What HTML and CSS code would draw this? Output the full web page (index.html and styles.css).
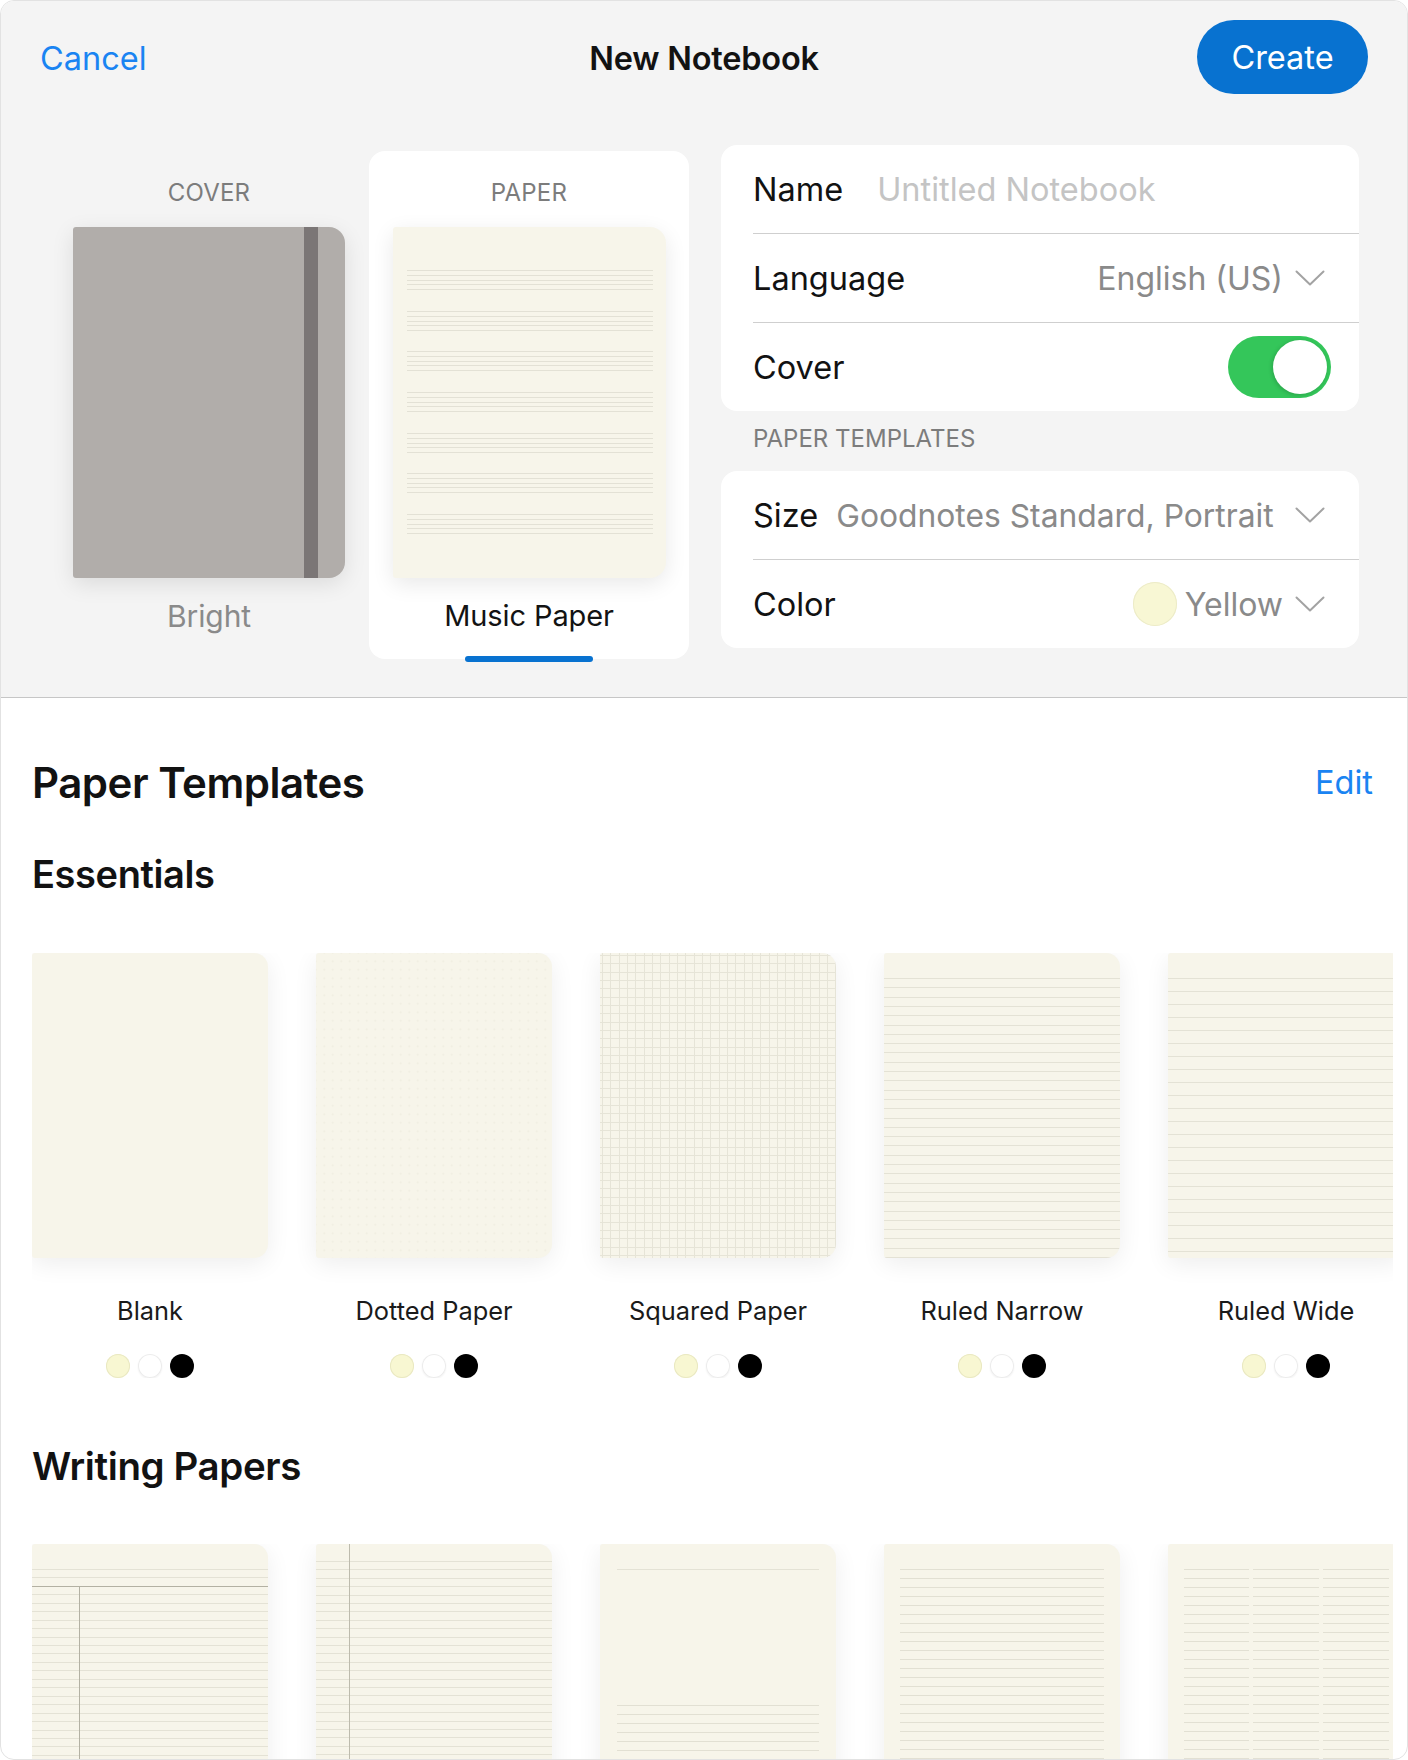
FILE: index.html
```html
<!DOCTYPE html>
<html lang="en">
<head>
<meta charset="utf-8">
<title>New Notebook</title>
<link rel="stylesheet" href="styles.css">
</head>
<body>
<div class="sheet">
  <div class="top">
    <header class="nav">
      <a class="nav-link">Cancel</a>
      <h1 class="nav-title">New Notebook</h1>
      <div class="nav-right"><button class="create">Create</button></div>
    </header>
    <div class="setup">
      <div class="picker">
        <div class="pick-panel">
          <div class="pick-label">COVER</div>
          <div class="cover"><span class="band"></span></div>
          <div class="pick-name muted">Bright</div>
        </div>
        <div class="pick-panel selected">
          <div class="pick-label">PAPER</div>
          <div class="music">
            <div class="staff"></div><div class="staff"></div><div class="staff"></div><div class="staff"></div><div class="staff"></div><div class="staff"></div><div class="staff"></div>
          </div>
          <div class="pick-name">Music Paper</div>
          <span class="indicator"></span>
        </div>
      </div>
      <div class="form">
        <div class="group">
          <div class="row">
            <span class="row-label">Name</span>
            <span class="placeholder">Untitled Notebook</span>
          </div>
          <div class="row">
            <span class="row-label">Language</span>
            <span class="row-value">English (US)</span>
            <svg class="chev" width="30" height="16" viewBox="0 0 30 16"><path d="M1.5 1.5 L15 14.5 L28.5 1.5" fill="none" stroke="#a3a3a3" stroke-width="2" stroke-linecap="round" stroke-linejoin="round"/></svg>
          </div>
          <div class="row">
            <span class="row-label">Cover</span>
            <span class="toggle"><span class="knob"></span></span>
          </div>
        </div>
        <div class="group-label">PAPER TEMPLATES</div>
        <div class="group">
          <div class="row">
            <span class="row-label">Size</span>
            <span class="row-value size-value">Goodnotes Standard, Portrait</span>
            <svg class="chev push" width="30" height="16" viewBox="0 0 30 16"><path d="M1.5 1.5 L15 14.5 L28.5 1.5" fill="none" stroke="#a3a3a3" stroke-width="2" stroke-linecap="round" stroke-linejoin="round"/></svg>
          </div>
          <div class="row">
            <span class="row-label">Color</span>
            <span class="swatch"></span>
            <span class="row-value yellow-value">Yellow</span>
            <svg class="chev" width="30" height="16" viewBox="0 0 30 16"><path d="M1.5 1.5 L15 14.5 L28.5 1.5" fill="none" stroke="#a3a3a3" stroke-width="2" stroke-linecap="round" stroke-linejoin="round"/></svg>
          </div>
        </div>
      </div>
    </div>
  </div>

  <section class="templates">
    <div class="templates-head">
      <h2 class="templates-title">Paper Templates</h2>
      <a class="edit">Edit</a>
    </div>

    <h3 class="cat-title">Essentials</h3>
    <div class="thumbs">
      <div class="thumb">
        <div class="page blank"></div>
        <div class="thumb-name">Blank</div>
        <div class="dots"><span class="dot d-yellow"></span><span class="dot d-white"></span><span class="dot d-black"></span></div>
      </div>
      <div class="thumb">
        <div class="page dotted"></div>
        <div class="thumb-name">Dotted Paper</div>
        <div class="dots"><span class="dot d-yellow"></span><span class="dot d-white"></span><span class="dot d-black"></span></div>
      </div>
      <div class="thumb">
        <div class="page squared"></div>
        <div class="thumb-name">Squared Paper</div>
        <div class="dots"><span class="dot d-yellow"></span><span class="dot d-white"></span><span class="dot d-black"></span></div>
      </div>
      <div class="thumb">
        <div class="page narrow"></div>
        <div class="thumb-name">Ruled Narrow</div>
        <div class="dots"><span class="dot d-yellow"></span><span class="dot d-white"></span><span class="dot d-black"></span></div>
      </div>
      <div class="thumb">
        <div class="page wide"></div>
        <div class="thumb-name">Ruled Wide</div>
        <div class="dots"><span class="dot d-yellow"></span><span class="dot d-white"></span><span class="dot d-black"></span></div>
      </div>
    </div>

    <h3 class="cat-title writing">Writing Papers</h3>
    <div class="thumbs">
      <div class="thumb"><div class="page cornell"></div></div>
      <div class="thumb"><div class="page margin"></div></div>
      <div class="thumb"><div class="page letter"></div></div>
      <div class="thumb"><div class="page inset"></div></div>
      <div class="thumb"><div class="page columns"></div></div>
    </div>
  </section>
</div>
</body>
</html>
```

FILE: styles.css
```css
* { box-sizing: border-box; }

html, body {
  margin: 0;
  padding: 0;
  background: #ffffff;
}

body {
  font-family: "Inter", "Noto Sans", "Liberation Sans", sans-serif;
  color: #111111;
  -webkit-font-smoothing: antialiased;
}

.sheet {
  width: 1408px;
  height: 1760px;
  overflow: hidden;
  border-radius: 14px;
  border: 1px solid #e2e2e2;
  background: #ffffff;
}

/* ---------- top area ---------- */
.top {
  height: 697px;
  background: #f4f4f4;
  border-bottom: 1px solid #c6c6c6;
}

.nav {
  height: 114px;
  display: grid;
  grid-template-columns: 1fr auto 1fr;
  align-items: center;
  padding: 0 39px 0 39px;
}

.nav-link {
  font-size: 32.5px;
  color: #1a84f2;
}

.nav-title {
  margin: 0;
  font-size: 32.5px;
  font-weight: 600;
  color: #121212;
  letter-spacing: -0.2px;
}

.nav-right {
  display: flex;
  justify-content: flex-end;
}

.create {
  height: 74px;
  width: 171px;
  border: none;
  border-radius: 37px;
  background: #0872d0;
  color: #ffffff;
  font-family: inherit;
  font-size: 32.5px;
  font-weight: 400;
  margin-top: -2px;
}

.setup {
  display: flex;
  gap: 32px;
  padding: 30px 48px 0 48px;
}

.picker {
  display: flex;
  width: 640px;
  margin-top: 6px;
  align-items: flex-start;
}

.pick-panel {
  position: relative;
  width: 320px;
  height: 508px;
  padding-top: 28px;
  display: flex;
  flex-direction: column;
  align-items: center;
  border-radius: 16px;
}

.pick-panel.selected {
  background: #ffffff;
}

.pick-label {
  height: 28px;
  line-height: 28px;
  font-size: 24px;
  color: #7c7c7c;
  letter-spacing: 0.2px;
}

.cover {
  margin-top: 20px;
  width: 272px;
  height: 351px;
  border-radius: 3px 16px 16px 3px;
  background: #b1adaa;
  box-shadow: 0 6px 22px rgba(0, 0, 0, 0.10);
  display: flex;
}

.band {
  margin-left: 231px;
  width: 14px;
  height: 100%;
  background: #7b7676;
}

.music {
  margin-top: 20px;
  width: 273px;
  height: 351px;
  border-radius: 3px 16px 16px 3px;
  background: #f7f5ea;
  box-shadow: 0 6px 22px rgba(0, 0, 0, 0.09);
  padding: 43px 13px 0 14px;
  display: flex;
  flex-direction: column;
  gap: 20.5px;
}

.staff {
  height: 20.2px;
  background: repeating-linear-gradient(to bottom, #e3e1d5 0 1px, transparent 1px 4.8px);
}

.pick-name {
  margin-top: 22px;
  height: 32px;
  line-height: 32px;
  font-size: 29px;
  color: #131313;
  letter-spacing: -0.1px;
}

.pick-name.muted {
  color: #8a8a8a;
  font-size: 30px;
}

.indicator {
  position: absolute;
  left: 96px;
  bottom: -3px;
  width: 128px;
  height: 6px;
  border-radius: 3px;
  background: #0872d0;
}

/* ---------- form ---------- */
.form {
  width: 640px;
}

.group {
  background: #ffffff;
  border-radius: 16px;
  overflow: hidden;
}

.row {
  height: 88px;
  margin-left: 32px;
  padding-right: 34px;
  display: flex;
  align-items: center;
  gap: 12px;
}

.row + .row {
  height: 89px;
  border-top: 1px solid #cfcfcf;
}

.row-label {
  font-size: 32.5px;
  color: #121212;
  flex: none;
}

.placeholder {
  margin-left: 22px;
  font-size: 32.5px;
  color: #c4c4c4;
}

.row-value {
  margin-left: auto;
  font-size: 32px;
  color: #8a8a8a;
  white-space: nowrap;
}

.size-value {
  margin-left: 6px;
  font-size: 31.8px;
}

.yellow-value {
  margin-left: 0;
}

.chev {
  flex: none;
  margin-left: 0;
}

.chev.push {
  margin-left: auto;
}

.swatch {
  margin-left: auto;
  width: 44px;
  height: 44px;
  border-radius: 50%;
  background: #f8f7d4;
  box-shadow: inset 0 0 0 1px #ecebc8;
  margin-right: -4px;
}

.toggle {
  margin-left: auto;
  margin-right: -6px;
  width: 103px;
  height: 62px;
  border-radius: 31px;
  background: #34c65a;
  padding: 4px;
  display: flex;
  justify-content: flex-end;
}

.knob {
  width: 54px;
  height: 54px;
  border-radius: 50%;
  background: #ffffff;
  box-shadow: -1px 1px 4px rgba(0, 0, 0, 0.18);
}

.group-label {
  height: 60px;
  padding: 14px 0 0 32px;
  line-height: 28px;
  font-size: 24px;
  color: #7c7c7c;
}

/* ---------- templates ---------- */
.templates {
  padding: 59px 34px 0 31px;
}

.templates-head {
  display: flex;
  justify-content: space-between;
  align-items: center;
  height: 50px;
}

.templates-title {
  margin: 0;
  font-size: 42px;
  font-weight: 600;
  letter-spacing: -0.5px;
  color: #121212;
}

.edit {
  font-size: 32.5px;
  color: #1a84f2;
}

.cat-title {
  margin: 45px 0 0 0;
  height: 44px;
  line-height: 44px;
  font-size: 38px;
  font-weight: 600;
  letter-spacing: -0.4px;
  color: #121212;
}

.cat-title.writing {
  margin-top: 66px;
  font-size: 38.5px;
}

.thumbs {
  display: flex;
  gap: 48px;
  margin: 57px 0 0 0;
  width: 1361px;
  overflow: hidden;
}

.cat-title.writing + .thumbs {
  margin-top: 56px;
}

.thumb {
  flex: none;
  width: 236px;
  display: flex;
  flex-direction: column;
  align-items: center;
}

.page {
  width: 236px;
  height: 305px;
  border-radius: 3px 14px 14px 3px;
  background-color: #f7f5ea;
  box-shadow: 0 6px 24px rgba(0, 0, 0, 0.07);
}

.dotted {
  background-image: radial-gradient(circle, rgba(180, 176, 150, 0.12) 0.8px, transparent 1.1px);
  background-size: 8.5px 8.5px;
  background-position: 4px 4px;
}

.squared {
  background-image:
    repeating-linear-gradient(to right, #e6e4d7 0 1px, transparent 1px 8.33px),
    repeating-linear-gradient(to bottom, #e6e4d7 0 1px, transparent 1px 8.33px);
  background-position: 2px 0, 0 2px;
}

.narrow {
  background-image: repeating-linear-gradient(to bottom, #e4e2d5 0 1px, transparent 1px 9.3px);
  background-position: 0 25px;
  background-repeat: no-repeat;
  background-size: 100% 100%;
}

.wide {
  background-image: repeating-linear-gradient(to bottom, #e4e2d5 0 1px, transparent 1px 13px);
  background-position: 0 25px;
  background-repeat: no-repeat;
  background-size: 100% 100%;
}

.thumb-name {
  margin-top: 38px;
  height: 30px;
  line-height: 30px;
  font-size: 25.4px;
  color: #1a1a1a;
}

.dots {
  margin-top: 28px;
  display: flex;
  gap: 8px;
}

.dot {
  width: 24px;
  height: 24px;
  border-radius: 50%;
}

.d-yellow {
  background: #f8f7d2;
  box-shadow: inset 0 0 0 1px #e9e8c2;
}

.d-white {
  background: #ffffff;
  box-shadow: inset 0 0 0 1px #ececec, 0 1px 2px rgba(0, 0, 0, 0.06);
}

.d-black {
  background: #000000;
}

/* writing papers */
.cornell {
  background-image:
    linear-gradient(#b3b1a3, #b3b1a3),
    linear-gradient(#b3b1a3, #b3b1a3),
    repeating-linear-gradient(to bottom, #e4e2d5 0 1px, transparent 1px 8.45px);
  background-position: 47px 42px, 0 42px, 0 25px;
  background-size: 1px 100%, 100% 1px, 100% 100%;
  background-repeat: no-repeat;
}

.margin {
  background-image:
    linear-gradient(#bdbbad, #bdbbad),
    repeating-linear-gradient(to bottom, #e4e2d5 0 1px, transparent 1px 8.4px);
  background-position: 33px 0, 0 17px;
  background-size: 1px 100%, 100% 100%;
  background-repeat: no-repeat;
}

.letter {
  background-image:
    linear-gradient(#e4e2d5, #e4e2d5),
    repeating-linear-gradient(to bottom, #e2e0d3 0 1px, transparent 1px 9px);
  background-position: 17px 25px, 17px 161px;
  background-size: 202px 1px, 202px 100%;
  background-repeat: no-repeat;
}

.inset {
  background-image: repeating-linear-gradient(to bottom, #e2e0d3 0 1px, transparent 1px 9px);
  background-position: 16px 25px;
  background-size: 204px 100%;
  background-repeat: no-repeat;
}

.columns {
  background-image:
    linear-gradient(#f7f5ea, #f7f5ea),
    linear-gradient(#f7f5ea, #f7f5ea),
    repeating-linear-gradient(to bottom, #e2e0d3 0 1px, transparent 1px 9px);
  background-position: 81px 0, 151px 0, 16px 25px;
  background-size: 4px 100%, 4px 100%, 205px 100%;
  background-repeat: no-repeat;
}
```
